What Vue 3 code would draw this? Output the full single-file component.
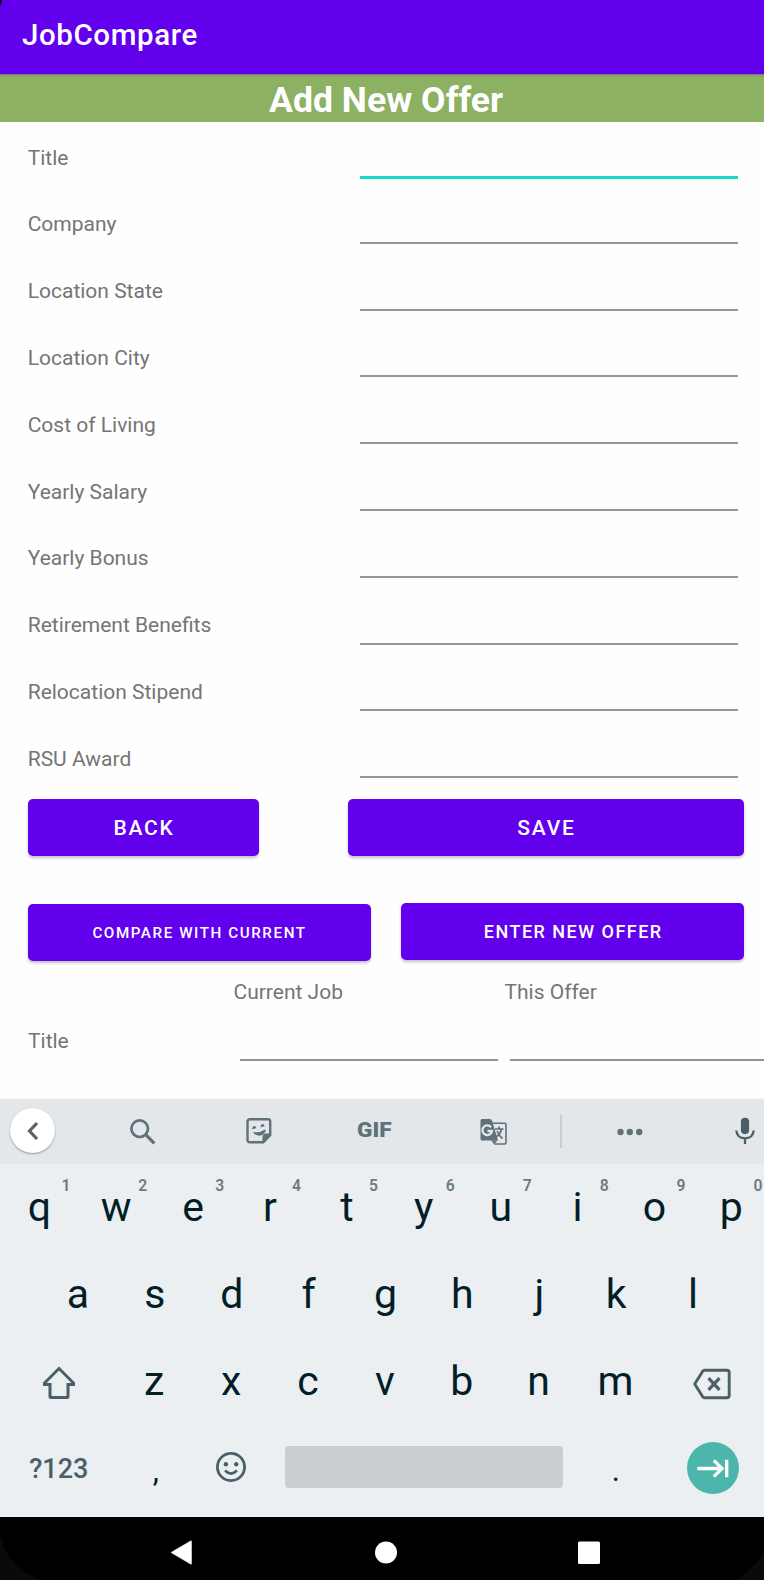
<script setup>
const fields = [
  'Title', 'Company', 'Location State', 'Location City', 'Cost of Living',
  'Yearly Salary', 'Yearly Bonus', 'Retirement Benefits', 'Relocation Stipend', 'RSU Award',
]
const topKeys = [...'qwertyuiop'].map((letter, i) => ({ letter, hint: (i + 1) % 10 }))
const homeKeys = [...'asdfghjkl']
const bottomKeys = [...'zxcvbnm']
</script>

<template>
  <div class="screen">
    <header class="appbar">JobCompare</header>
    <h1 class="banner"><span>Add New Offer</span></h1>

    <main class="content">
      <div class="form">
        <div v-for="(f, i) in fields" :key="f" class="row">
          <label>{{ f }}</label>
          <div class="field" :class="{ active: i === 0 }"></div>
        </div>
      </div>
      <div class="actions">
        <button class="btn back">Back</button>
        <button class="btn save">Save</button>
      </div>
      <div class="actions second">
        <button class="btn compare">Compare with current</button>
        <button class="btn enter">Enter new offer</button>
      </div>
      <div class="heads">
        <span></span><span class="cur">Current Job</span><span class="off">This Offer</span>
      </div>
      <div class="cmp">
        <span class="cmp-label">Title</span>
        <div class="line"></div>
        <div class="line"></div>
      </div>
    </main>

    <section class="keyboard">
      <div class="toolbar">
        <div class="collapse">
          <svg width="46" height="46" viewBox="0 0 46 46"><path d="M27 15 19.500 23l7.500 8" fill="none" stroke="#616161" stroke-width="3.200" /></svg>
        </div>
        <svg class="search" width="26" height="26" viewBox="0 0 26 26" fill="none" stroke="#5f7179">
          <circle cx="9.700" cy="9.700" r="8.300" stroke-width="2.700" />
          <path d="M15.700 15.700 24.300 24.300" stroke-width="3.200" />
        </svg>
        <svg class="sticker" width="26" height="26" viewBox="0 0 26 26">
          <path d="M4 1.300H22Q24.200 1.300 24.200 3.500V17L17.300 24.200H4Q1.500 24.200 1.500 22V3.500Q1.500 1.300 4 1.300Z" fill="none" stroke="#5f7179" stroke-width="2.400" />
          <path d="M24.500 15.500H20Q16.500 15.500 16.500 19V24.700H18L24.500 18Z" fill="#5f7179" />
          <path d="M7 14.200Q14 15 19.700 11.300Q19.500 17.300 13.500 17.700Q9 17.800 7 14.200Z" fill="#5f7179" />
          <path d="M6 11.300Q6.500 8 8.300 8T10.300 10.300ZM14.500 9.300Q14.700 6.300 16.300 6.100T18.700 8.300Z" fill="#5f7179" />
        </svg>
        <span class="gif">GIF</span>
        <svg class="translate" width="28" height="28" viewBox="0 0 28 28">
          <path d="M12 5.200H24.500Q26 5.200 26 6.700V24.500Q26 26 24.500 26H15L12 22" fill="none" stroke="#5f7179" stroke-width="1.600" />
          <path d="M2 1H10Q11.500 1 12 2.500L18 22.500H2Q0.500 22.500 0.500 21V2.500Q0.500 1 2 1Z" fill="#5f7179" />
          <path d="M12.500 22.500H17.500L14 26Z" fill="#5f7179" />
          <path d="M15 11H23.500M19 8.500V11M21.500 11Q20.500 16 15.500 19.500M17 13Q19 17.500 22.500 20.500" fill="none" stroke="#5f7179" stroke-width="1.700" />
          <path d="M11 9.200A4.800 4.800 0 1 0 12 13H7.500" fill="none" stroke="#e3e7ea" stroke-width="2.300" />
        </svg>
        <i class="divider"></i>
        <svg class="dots" width="26" height="8" viewBox="0 0 26 8" fill="#5f7179">
          <circle cx="3.500" cy="4" r="3.200" /><circle cx="12.800" cy="4" r="3.200" /><circle cx="22.200" cy="4" r="3.200" />
        </svg>
        <svg class="mic" width="20" height="28" viewBox="0 0 20 28">
          <rect x="5.900" y="0.700" width="8.200" height="16.500" rx="4.100" fill="#4b5f68" />
          <path d="M1.300 13.500Q2 21.300 10 21.300T18.700 13.500M10 21V27" fill="none" stroke="#4b5f68" stroke-width="2.300" />
        </svg>
      </div>

      <div class="keys r1">
        <div v-for="k in topKeys" :key="k.letter" class="key">{{ k.letter }}<sup>{{ k.hint }}</sup></div>
      </div>
      <div class="keys r2">
        <div v-for="k in homeKeys" :key="k" class="key">{{ k }}</div>
      </div>
      <div class="keys r3">
        <div class="wide">
          <svg width="36" height="34" viewBox="0 0 36 34"><path d="M18 2.500 32.500 17V18.500H27V30.500Q27 31.500 26 31.500H10Q9 31.500 9 30.500V18.500H3.500V17Z" fill="none" stroke="#4b5f68" stroke-width="3" /></svg>
        </div>
        <div v-for="k in bottomKeys" :key="k" class="key">{{ k }}</div>
        <div class="wide del">
          <svg width="38" height="32" viewBox="0 0 38 32" fill="none" stroke="#4b5f68">
            <path d="M11.500 2.200H34Q36.200 2.200 36.200 4.400V27.600Q36.200 29.800 34 29.800H11.500Q10.300 29.800 9.700 28.800L1.700 16 9.700 3.200Q10.300 2.200 11.500 2.200Z" stroke-width="2.900" />
            <path d="M15.500 10.200 26.500 21.800M26.500 10.200 15.500 21.800" stroke-width="3.200" />
          </svg>
        </div>
      </div>
      <div class="keys r4">
        <div class="sym">?123</div>
        <div class="punct">,</div>
        <div class="emoji">
          <svg width="30" height="30" viewBox="0 0 30 30" fill="none" stroke="#4b5f68">
            <circle cx="15" cy="15" r="13.600" stroke-width="2.800" />
            <circle cx="9.900" cy="12.300" r="2.200" fill="#4b5f68" stroke="none" /><circle cx="20.200" cy="12.300" r="2.200" fill="#4b5f68" stroke="none" />
            <path d="M9 18.500Q15 24.500 21 18.500" stroke-width="2.700" />
          </svg>
        </div>
        <div class="space"></div>
        <div class="punct">.</div>
        <div class="enter-key">
          <svg width="52" height="52" viewBox="0 0 52 52" fill="none" stroke="#fff" stroke-width="3.300">
            <path d="M10.300 26.500H35M26.800 18.300 35 26.500 26.800 34.700M39.700 17.700V35.300" />
          </svg>
        </div>
      </div>
    </section>

    <nav class="navbar">
      <svg width="764" height="63" viewBox="0 0 764 63">
        <path d="M0 16Q6 50 40 63H0ZM764 35Q754 52 735 63H764Z" fill="#0b0a08" />
        <path d="M171 35.500 190.500 24Q191.500 23.500 191.500 24.500V46.500Q191.500 47.500 190.500 47Z" fill="#fff" stroke="#fff" stroke-width="0.500" stroke-linejoin="round" />
        <circle cx="386" cy="35.500" r="11" fill="#fff" />
        <rect x="578" y="24.500" width="22" height="22.500" rx="1.500" fill="#fff" />
      </svg>
    </nav>
    <svg class="corner" width="3" height="7" viewBox="0 0 3 7"><path d="M0 0H2.300Q1 3 0 6.500Z" fill="#000" /></svg>
  </div>
</template>

<style>
body { margin: 0; overflow: hidden; background: #fff; }
</style>

<style scoped>
.screen { position: relative; width: 764px; height: 1580px; overflow: hidden; background: #fefefe; font-family: Roboto, sans-serif; display: flex; flex-direction: column; }
.appbar { height: 74px; box-sizing: border-box; padding-left: 22px; background: #6200ee; color: #fff; font-size: 29.500px; font-weight: 500; line-height: 70px; letter-spacing: 0.600px; flex: none; }
.banner { margin: 0; height: 48px; flex: none; background: linear-gradient(#7d779a 0 1px, #809f5f 1px, #8db163 4px); color: #fff; font-size: 35.600px; font-weight: 700; line-height: 53px; text-align: center; padding-left: 8px; white-space: nowrap; }
.content { height: 977px; flex: none; overflow: hidden; color: #757575; font-size: 21px; }
.form { display: grid; grid-auto-rows: 66.800px; }
.row { display: grid; grid-template-columns: 332px 378.500px; padding-left: 27.700px; }
.row label { line-height: 28px; padding-top: 21.700px; white-space: nowrap; }
.field { height: 55px; box-sizing: border-box; border-bottom: 2px solid #979797; }
.field.active { height: 56.500px; border-bottom: 3px solid #14dcc8; }
.actions { display: flex; justify-content: space-between; padding: 9px 20px 0 28px; height: 57px; }
.actions.second { padding-top: 47px; }
.btn { border: 0; height: 57px; padding: 0; border-radius: 5px; background: #6200ee; color: #fff; font-family: inherit; font-weight: 500; font-size: 21px; letter-spacing: 1.800px; text-transform: uppercase; box-shadow: 0 2px 3px rgba(0,0,0,.24); }
.back, .save { padding: 2px 0 0 1px; }
.back { width: 231px; }
.save { width: 396px; }
.compare { width: 343px; font-size: 15.200px; letter-spacing: 1.570px; margin-top: 1px; padding-top: 2px; }
.enter { width: 343.500px; font-size: 18px; letter-spacing: 1.480px; padding-left: 2px; }
.heads { display: grid; grid-template-columns: 233.500px 271px 1fr; line-height: 30px; padding-top: 17.500px; }
.cmp { display: grid; grid-template-columns: 211.500px 258.500px 280px; padding-left: 28px; height: 54px; }
.cmp .line { height: 52px; border-bottom: 2px solid #929292; }
.cmp .line + .line { margin-left: 12px; }
.cmp-label { line-height: 30px; padding-top: 19px; }
.keyboard { height: 418px; flex: none; background: #ebeff2; color: #031e28; box-shadow: 0 0 3px rgba(0,0,0,.07); }
.toolbar { height: 65px; background: #e3e7ea; display: flex; align-items: center; }
.toolbar > * { flex: none; }
.collapse { width: 45px; height: 45px; margin: 0 0 2px 10px; border-radius: 50%; background: #fff; box-shadow: 0 1px 2px rgba(0,0,0,.35); }
.search { margin-left: 75px; }
.sticker { margin: 0 0 2px 90px; }
.gif { margin: 0 0 1px 85px; width: 36px; font-size: 19.500px; font-weight: 900; color: #5f7179; line-height: 20px; transform: scaleX(1.160); transform-origin: left; }
.translate { margin-left: 87px; }
.divider { width: 1.500px; height: 33px; margin-left: 52px; background: #c8cdd1; }
.dots { margin-left: 55px; }
.mic { margin: 0 0 1px 92px; }
.keys { display: flex; font-size: 41px; }
.key { width: 76.900px; flex: none; text-align: center; position: relative; }
.r1 { line-height: 86px; height: 84px; padding-left: 0.900px; }
.r2 { line-height: 92px; height: 90px; padding-left: 39.500px; }
.r3 { line-height: 87px; height: 84px; }
.r3 .key { left: -0.500px; }
.wide { width: 116.300px; flex: none; display: flex; align-items: center; justify-content: center; box-sizing: border-box; padding: 3px 0 0 1px; height: 86px; }
.del { margin-left: 0; width: 115px; padding-left: 0; padding-top: 6px; }
sup { position: absolute; left: 60.500px; top: 12px; font-size: 15.700px; line-height: 20px; font-weight: 600; color: #6c7b82; }
.r4 { height: 95px; }
.sym { width: 117.500px; text-align: center; font-size: 27px; font-weight: 500; color: #4b5f68; line-height: 94px; }
.punct { width: 76.500px; text-align: center; font-size: 31px; line-height: 98px; }
.emoji { width: 74px; display: flex; justify-content: center; padding-top: 30px; }
.space { width: 278px; height: 42px; margin: 24px 15px 0 16.500px; border-radius: 4px; background: #c9cdd0; }
.enter-key { width: 52px; height: 52px; margin: 20px 0 0 32.500px; border-radius: 50%; background: #4db6ac; }
.navbar { height: 63px; background: #000; flex: none; position: relative; }
.navbar svg { display: block; }
.corner { position: absolute; left: 0; top: 0; }
</style>
